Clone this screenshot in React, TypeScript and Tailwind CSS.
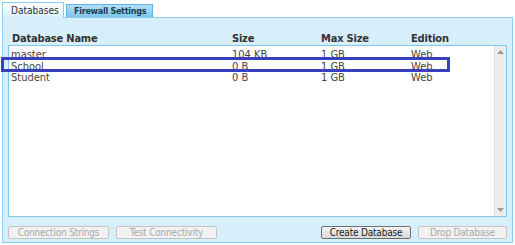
import React from "react";

const rows = [
  { name: "master", size: "104 KB", max: "1 GB", edition: "Web" },
  { name: "School", size: "0 B", max: "1 GB", edition: "Web" },
  { name: "Student", size: "0 B", max: "1 GB", edition: "Web" },
];

function Btn({ label, enabled, w }: { label: string; enabled?: boolean; w: string }) {
  return (
    <button
      className={`${w} h-[13px] flex items-center justify-center whitespace-nowrap rounded-[2px] border text-[10px] tracking-[-0.2px] leading-none ${
        enabled
          ? "border-[#707070] bg-gradient-to-b from-[#f4f4f4] to-[#d8d8d8] text-[#222]"
          : "border-[#c4c4c4] bg-[#f2f2f2] text-[#a8a8a8]"
      }`}
    >
      {label}
    </button>
  );
}

export default function App() {
  return (
    <div className="relative w-[515px] h-[245px] bg-white text-[11px]" style={{ fontFamily: '"DejaVu Sans Condensed", "Noto Sans", sans-serif' }}>
      <div className="flex items-end pl-[2px] pt-[1px] h-[17px] whitespace-nowrap">
        <div className="relative z-10 w-[62px] h-[16px] border border-b-0 border-[#8fcdee] bg-gradient-to-b from-white to-[#d7eefb] text-[#333] text-[10px] pl-[8px] pt-[1px] leading-[13px] mb-[-1px]">
          Databases
        </div>
        <div className="ml-[2px] w-[87px] h-[13px] border border-b-0 border-[#5cb6e6] bg-gradient-to-b from-[#b3e0f7] to-[#7cc6ec] text-[#1c3b52] text-[9px] tracking-[-0.3px] font-bold pl-[7px] leading-[12px]">
          Firewall Settings
        </div>
      </div>
      <div className="mx-[2px] h-[226px] border border-[#8fcdee] bg-[#d7eefb] px-[5px] pt-[15px]">
        <div className="flex font-bold text-[#333] h-[12px] leading-[12px] pl-[4px] tracking-[-0.2px]">
          <div className="w-[220px]">Database Name</div>
          <div className="w-[89px]">Size</div>
          <div className="w-[90px]">Max Size</div>
          <div>Edition</div>
        </div>
        <div className="flex h-[172px] border border-[#7fc6ea] bg-white">
          <div className="flex-1 pt-[3px] pl-[2px] text-[#444]">
            {rows.map((r) => (
              <div key={r.name} className="flex h-[11.5px] leading-[11px]">
                <div className="w-[221px]">{r.name}</div>
                <div className="w-[89px]">{r.size}</div>
                <div className="w-[90px]">{r.max}</div>
                <div>{r.edition}</div>
              </div>
            ))}
          </div>
          <div className="w-[12px] bg-[#ececec] border-l border-[#e0e0e0] flex flex-col items-center justify-between py-[4px]">
            <svg width="7" height="4" viewBox="0 0 7 4"><path d="M0 4 L3.5 0 L7 4 Z" fill="#9a9a9a" /></svg>
            <svg width="7" height="4" viewBox="0 0 7 4"><path d="M0 0 L3.5 4 L7 0 Z" fill="#9a9a9a" /></svg>
          </div>
        </div>
        <div className="flex items-center mt-[9px] gap-[7px]">
          <Btn label="Connection Strings" w="w-[101px]" />
          <Btn label="Test Connectivity" w="w-[101px]" />
          <div className="flex-1" />
          <Btn label="Create Database" enabled w="w-[90px]" />
          <Btn label="Drop Database" w="w-[89px]" />
        </div>
      </div>
      <div className="absolute left-[1px] top-[57px] w-[449px] h-[15px] border-[3px] border-[#3a3fc0]" />
    </div>
  );
}
